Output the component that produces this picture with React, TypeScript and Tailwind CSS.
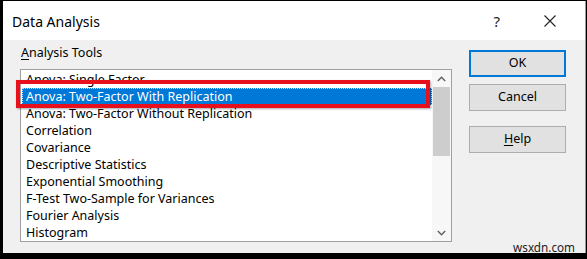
import React from "react";

const items = [
  "Anova: Single Factor",
  "Anova: Two-Factor With Replication",
  "Anova: Two-Factor Without Replication",
  "Correlation",
  "Covariance",
  "Descriptive Statistics",
  "Exponential Smoothing",
  "F-Test Two-Sample for Variances",
  "Fourier Analysis",
  "Histogram",
];

export default function App() {
  return (
    <div
      className="w-[587px] h-[259px] bg-black pl-[3px] pt-[1px] pr-[1px] pb-[6px] overflow-hidden"
      style={{ fontFamily: '"Noto Sans", "Open Sans", sans-serif' }}
    >
      <div className="relative w-full h-full bg-[#f0f0f0] border-r border-[#9a9a9a] flex flex-col">
        {/* title bar */}
        <div className="h-[39px] bg-white flex items-center shrink-0">
          <div className="pl-[9px] pt-[2px] text-[14px] text-black leading-none">Data Analysis</div>
          <div className="ml-auto flex items-center pr-[29px] pt-[1px]">
            <span className="text-[15px] text-[#222] leading-none mr-[44px]">?</span>
            <svg width="12" height="12" viewBox="0 0 12 12" className="block">
              <path d="M0.5 0.5 L11.5 11.5 M11.5 0.5 L0.5 11.5" stroke="#222" strokeWidth="1.1" fill="none" />
            </svg>
          </div>
        </div>
        {/* body */}
        <div className="flex-1 flex items-start">
          <div className="pl-[17px] pt-[5px] flex flex-col">
            <div className="text-[12.5px] leading-[16px] text-black pl-[1px] mb-[8px]">
              <span className="underline underline-offset-2">A</span>nalysis Tools
            </div>
            <div className="w-[432px] h-[173px] bg-white border border-[#a0a0a0] flex">
              <div className="flex-1 flex flex-col pt-[1px] pl-[1px] overflow-hidden">
                {items.map((t, i) =>
                  i === 1 ? (
                    <div
                      key={t}
                      className="h-[17px] shrink-0 bg-[#0078d7] text-white text-[12.5px] leading-[15px] pl-[3px] border border-dotted border-[#c8ddf2]"
                    >
                      {t}
                    </div>
                  ) : (
                    <div key={t} className="h-[17px] shrink-0 text-black text-[12.5px] leading-[17px] pl-[4px]">
                      {t}
                    </div>
                  )
                )}
              </div>
              <div className="w-[19px] shrink-0 bg-[#f7f7f7] flex flex-col">
                <div className="h-[17px] flex items-center justify-center">
                  <svg width="9" height="6" viewBox="0 0 9 6">
                    <path d="M0.8 5 L4.5 1.2 L8.2 5" stroke="#606060" strokeWidth="1.4" fill="none" />
                  </svg>
                </div>
                <div className="h-[69px] mx-[1px] bg-[#cdcdcd]" />
                <div className="flex-1" />
                <div className="h-[17px] flex items-center justify-center">
                  <svg width="9" height="6" viewBox="0 0 9 6">
                    <path d="M0.8 1 L4.5 4.8 L8.2 1" stroke="#606060" strokeWidth="1.4" fill="none" />
                  </svg>
                </div>
              </div>
            </div>
          </div>
          <div className="ml-[17px] pt-[10px] flex flex-col">
            <button className="w-[97px] h-[27px] bg-[#e1e1e1] border-2 border-[#0078d7] text-[12.5px] text-black leading-none">
              OK
            </button>
            <button className="mt-[7px] w-[97px] h-[27px] bg-[#e1e1e1] border border-[#adadad] text-[12.5px] text-black leading-none">
              Cancel
            </button>
            <button className="mt-[15px] w-[97px] h-[27px] bg-[#e1e1e1] border border-[#adadad] text-[12.5px] text-black leading-none">
              <span className="underline underline-offset-2">H</span>elp
            </button>
          </div>
        </div>
        {/* red highlight annotation */}
        <div className="absolute left-[13px] top-[79px] w-[414px] h-[28px] border-[4px] border-[#e8101c] shadow-[1px_1px_2px_rgba(0,0,0,0.35)]" />
        {/* watermark */}
        <div className="absolute right-[10px] bottom-[-1px] text-[11.7px] text-[#222] leading-[14px]">wsxdn.com</div>
      </div>
    </div>
  );
}
